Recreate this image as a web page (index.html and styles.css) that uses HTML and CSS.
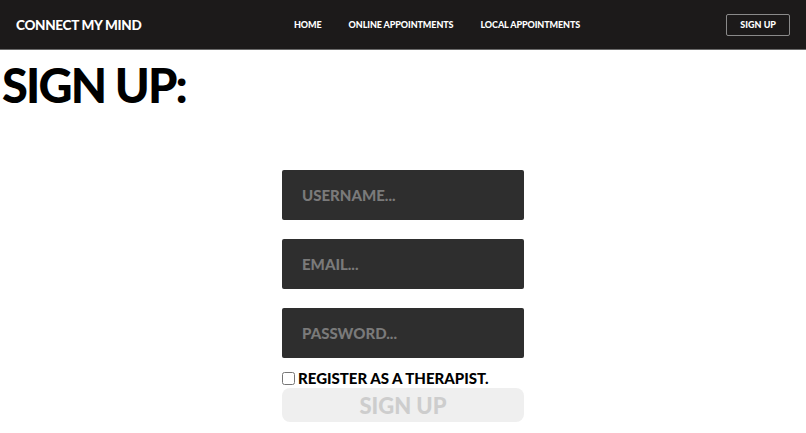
FILE: index.html
```html
<!DOCTYPE html>
<html lang="en">
<head>
  <meta charset="UTF-8">
  <title>Connect My Mind - Sign Up</title>
  <link rel="stylesheet" href="styles.css">
</head>
<body>
  <!-- Barra de navegacion -->
  <nav class="navbar">
    <a class="brand" href="#">CONNECT MY MIND</a>
    <ul class="nav-links">
      <li><a href="#">HOME</a></li>
      <li><a href="#">ONLINE APPOINTMENTS</a></li>
      <li><a href="#">LOCAL APPOINTMENTS</a></li>
    </ul>
    <a class="nav-btn" href="#">SIGN UP</a>
  </nav>

  <h1 class="title">SIGN UP:</h1>

  <!-- Formulario de registro -->
  <form class="signup-form">
    <input class="field" type="text" placeholder="USERNAME...">
    <input class="field" type="email" placeholder="EMAIL...">
    <input class="field" type="password" placeholder="PASSWORD...">
    <label class="check">
      <input type="checkbox">
      <span>REGISTER AS A THERAPIST.</span>
    </label>
    <button class="submit" type="submit">SIGN UP</button>
  </form>
</body>
</html>
```

FILE: styles.css
```css
body {
  margin: 0;
  font-family: Lato, "Liberation Sans", sans-serif;
  background-color: #fff;
}

.navbar {
  display: flex;
  align-items: center;
  height: 49px;
  padding: 0 16px;
  background-color: #1c1a1a;
  border-bottom: 1px solid #6a6a6a;
  line-height: 12px;
}

.brand {
  color: #fff;
  text-decoration: none;
  font-weight: 900;
  font-size: 13.5px;
  letter-spacing: -0.3px;
  width: 278px;
}

.nav-links {
  display: flex;
  align-items: center;
  gap: 27px;
  list-style: none;
  margin: 0;
  padding: 0;
  flex: 1;
  font-size: 9px;
}

.nav-links a {
  color: #fff;
  text-decoration: none;
  font-weight: 900;
  letter-spacing: -0.1px;
}

.nav-btn {
  color: #fff;
  text-decoration: none;
  font-weight: 900;
  font-size: 9px;
  border: 1px solid #8a8a8a;
  border-radius: 2px;
  padding: 5px 13px;
  line-height: 10px;
}

.title {
  margin: 8px 0 0 2px;
  font-size: 47px;
  font-weight: 900;
  line-height: 54px;
  color: #000;
  letter-spacing: -1.8px;
}

.signup-form {
  display: flex;
  flex-direction: column;
  width: 242px;
  margin: 58px 0 0 282px;
}

.field {
  height: 50px;
  margin-bottom: 19px;
  border: none;
  border-radius: 2px;
  background-color: #2e2e2e;
  padding: 0 20px;
  font-family: inherit;
  font-size: 15px;
  font-weight: 900;
  color: #fff;
  box-sizing: border-box;
}

.field::placeholder {
  color: #7a7a7a;
}

.field:last-of-type {
  margin-bottom: 13px;
}

.check {
  display: flex;
  align-items: center;
  gap: 3px;
  font-size: 15px;
  font-weight: 900;
  height: 14px;
}

.check input {
  width: 13px;
  height: 13px;
  margin: 0;
}

.submit {
  margin-top: 3px;
  height: 34px;
  border: none;
  border-radius: 8px;
  background-color: #efefef;
  color: #cdcdcd;
  font-family: inherit;
  font-size: 22px;
  font-weight: 900;
}
```
